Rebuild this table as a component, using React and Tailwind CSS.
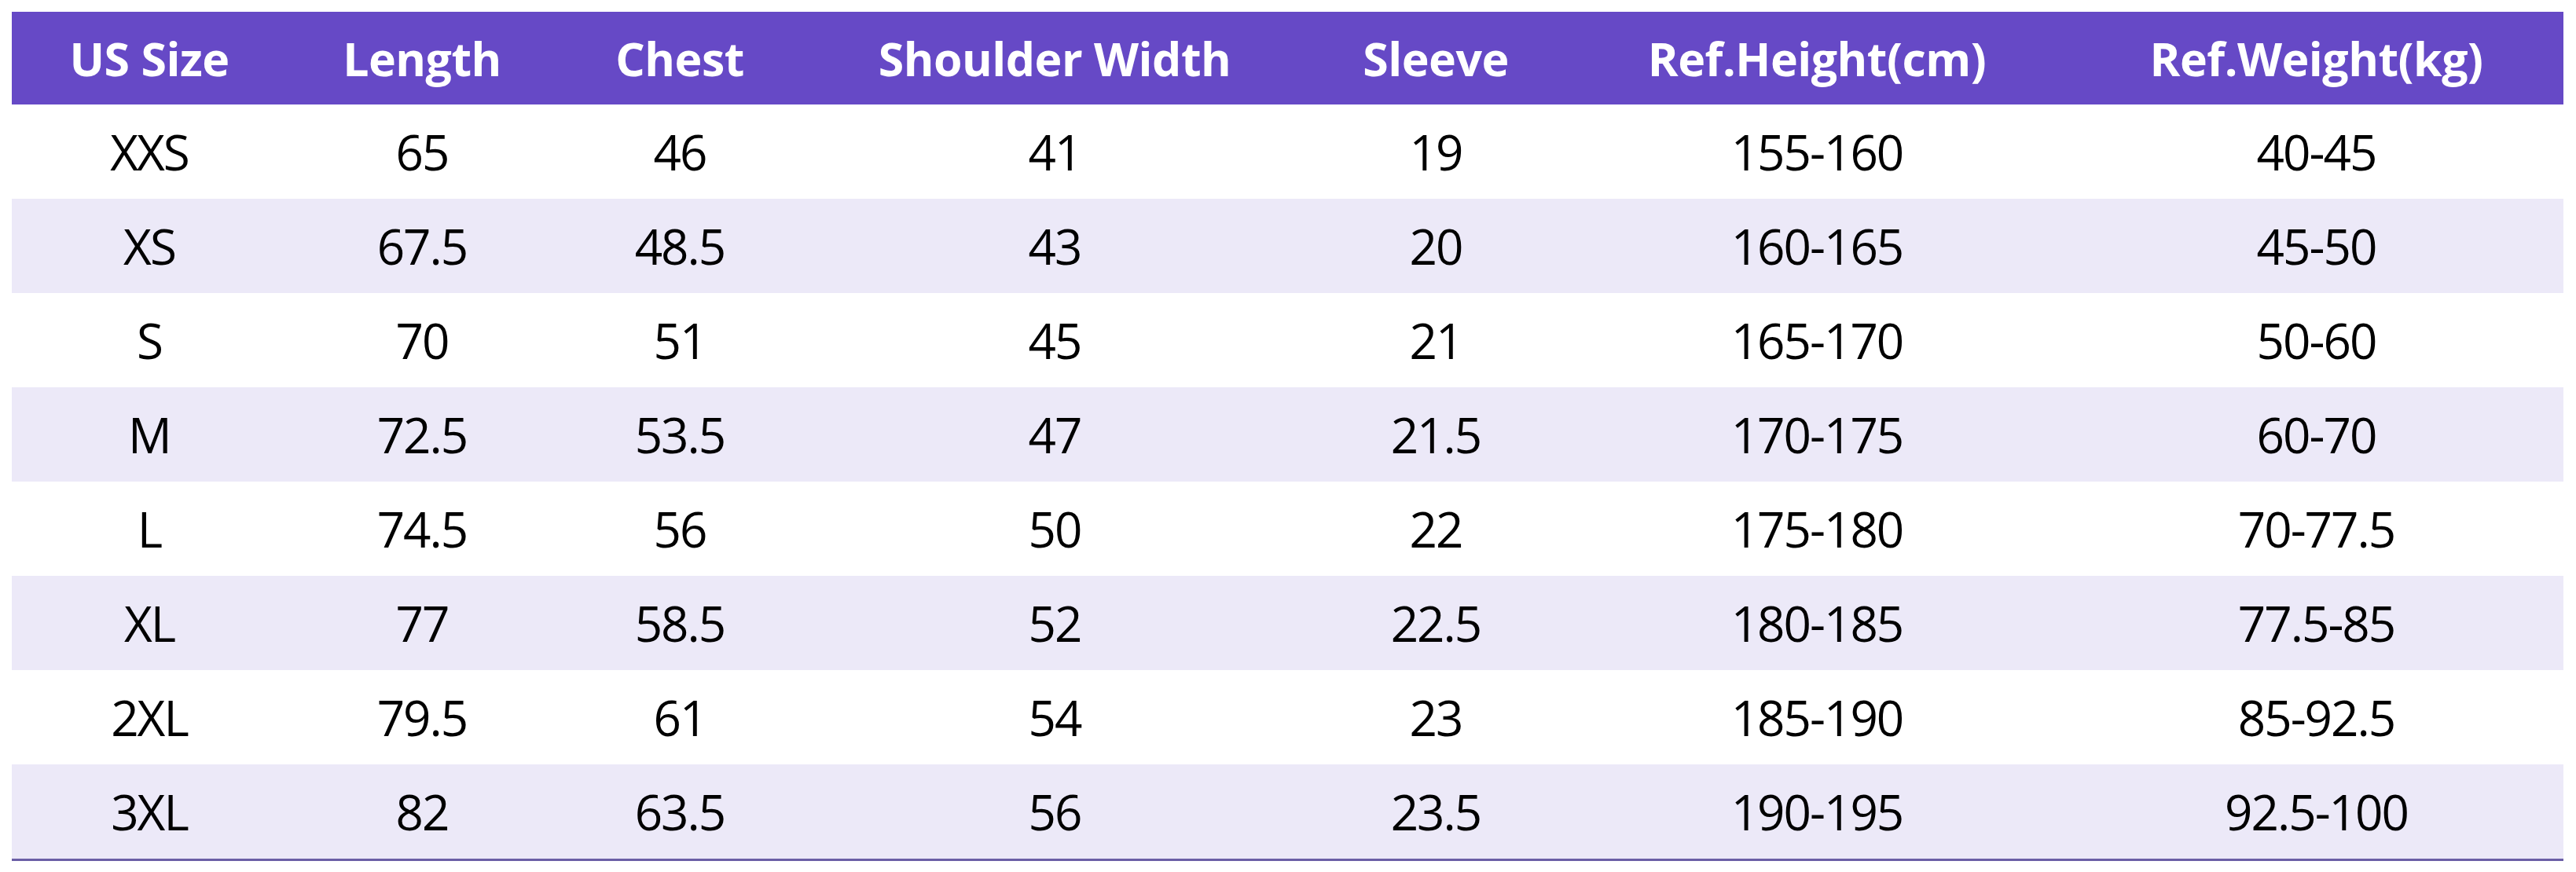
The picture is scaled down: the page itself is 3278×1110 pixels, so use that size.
const HEAD = ['US Size', 'Length', 'Chest', 'Shoulder Width', 'Sleeve', 'Ref.Height(cm)', 'Ref.Weight(kg)']

const ROWS = [
  ['XXS', '65', '46', '41', '19', '155-160', '40-45'],
  ['XS', '67.5', '48.5', '43', '20', '160-165', '45-50'],
  ['S', '70', '51', '45', '21', '165-170', '50-60'],
  ['M', '72.5', '53.5', '47', '21.5', '170-175', '60-70'],
  ['L', '74.5', '56', '50', '22', '175-180', '70-77.5'],
  ['XL', '77', '58.5', '52', '22.5', '180-185', '77.5-85'],
  ['2XL', '79.5', '61', '54', '23', '185-190', '85-92.5'],
  ['3XL', '82', '63.5', '56', '23.5', '190-195', '92.5-100'],
]

const COLS = 'grid grid-cols-[350px_344px_312px_642px_328px_642px_629px]'

export default function App() {
  return (
    <div
      className="w-[3278px] h-[1110px] bg-white pt-[15px] pl-[15px]"
      style={{ fontFamily: '"Open Sans", "Noto Sans", sans-serif' }}
    >
      <div className="w-[3247px] border-b-[3px] border-[#6b5ea6]">
        <div className={`${COLS} h-[118px] bg-[#6649c6] text-white font-bold text-[59px]`}>
          {HEAD.map((h) => (
            <div key={h} className="flex items-center justify-center tracking-[-0.5px]">
              {h}
            </div>
          ))}
        </div>
        {ROWS.map((row, i) => (
          <div
            key={row[0]}
            className={`${COLS} h-[120px] text-[62px] text-black ${i % 2 ? 'bg-[#ece9f8]' : 'bg-white'}`}
          >
            {row.map((c, j) => (
              <div key={j} className="flex items-center justify-center tracking-[-2px]">
                {c}
              </div>
            ))}
          </div>
        ))}
      </div>
    </div>
  )
}
